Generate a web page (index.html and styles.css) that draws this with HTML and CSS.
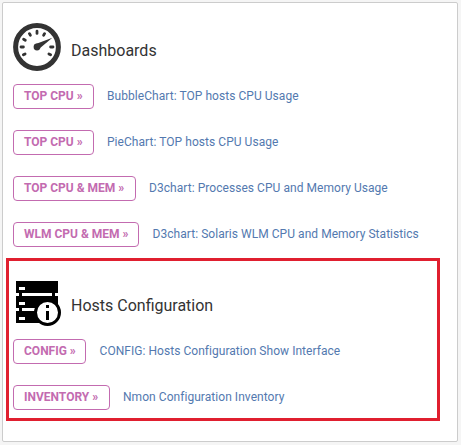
FILE: index.html
```html
<!DOCTYPE html>
<html lang="en">
<head>
<meta charset="utf-8">
<title>Dashboards</title>
<link rel="stylesheet" href="styles.css">
</head>
<body>
<main class="panel">
  <section class="group">
    <h2 class="heading">
      <svg class="icon" viewBox="0 0 48 48" aria-hidden="true">
        <circle cx="24" cy="24" r="21.4" fill="#fff" stroke="#333" stroke-width="5"/>
        <g stroke="#333" stroke-width="2.8" stroke-linecap="round">
          <path d="M24 8.2v2.2M16.4 10.6l1 1.6M31.6 10.6l-1 1.6M10.6 16.3l1.7 1M8 24h2.4M37.6 24H40M10.4 31.8l1.7-.9M37.6 31.8l-1.7-.9"/>
        </g>
        <path d="M39.4 14.7L26.5 25.4 22.7 21z" fill="#333"/>
        <circle cx="24" cy="24" r="3.4" fill="#333"/>
      </svg>
      <span class="title">Dashboards</span>
    </h2>
    <div class="row"><a class="button top">TOP CPU »</a><a class="link">BubbleChart: TOP hosts CPU Usage</a></div>
    <div class="row"><a class="button top">TOP CPU »</a><a class="link">PieChart: TOP hosts CPU Usage</a></div>
    <div class="row"><a class="button top-mem">TOP CPU &amp; MEM »</a><a class="link">D3chart: Processes CPU and Memory Usage</a></div>
    <div class="row"><a class="button wlm">WLM CPU &amp; MEM »</a><a class="link">D3chart: Solaris WLM CPU and Memory Statistics</a></div>
  </section>
  <section class="group highlighted">
    <h2 class="heading">
      <svg class="icon" viewBox="0 0 48 48" aria-hidden="true">
        <g shape-rendering="crispEdges">
          <path d="M3 3h42v12H3zM6 15h3v3H6zM39 15h3v3h-3zM3 18h42v12H3zM6 30h3v3H6zM3 33h30v12H3z"/>
          <path d="M6 9h6v3H6zM6 24h6v3H6zM6 39h6v3H6zM9 30h14v3H9z" fill="#fff"/>
        </g>
        <circle cx="34.5" cy="34.5" r="12" fill="#fff" stroke="#000" stroke-width="3"/>
        <path d="M33 27h3v3h-3zM33 33h3v9h-3z"/>
      </svg>
      <span class="title">Hosts Configuration</span>
    </h2>
    <div class="row"><a class="button config">CONFIG »</a><a class="link">CONFIG: Hosts Configuration Show Interface</a></div>
    <div class="row"><a class="button inventory">INVENTORY »</a><a class="link">Nmon Configuration Inventory</a></div>
  </section>
</main>
</body>
</html>
```
FILE: styles.css
```css
* {
  box-sizing: border-box;
}

body {
  margin: 0;
  padding: 2px;
  background: #f5f5f5;
  font: 12px/15px Roboto, "Liberation Sans", sans-serif;
}

.panel {
  width: 456px;
  height: 440px;
  padding: 20px 17px 0 3px;
  background: #fff;
  border: 1px solid #ccc;
  border-radius: 2px;
}

.group {
  display: flex;
  flex-direction: column;
  gap: 21px;
  padding: 0 7px 11px;
}

.highlighted {
  height: 163px;
  padding: 17px 4px 0;
  border: 3px solid #e01f2f;
}

.heading {
  display: flex;
  gap: 10px;
  height: 48px;
  margin: 0 0 -8px;
  font-size: 16px;
  font-weight: 400;
  line-height: 20px;
  color: #333;
}

.icon {
  flex: none;
  width: 48px;
  height: 48px;
}

.title {
  padding-top: 18px;
}

.row {
  display: flex;
  gap: 13px;
  height: 25px;
  white-space: nowrap;
}

.button {
  flex: none;
  height: 25px;
  padding: 4px 0 4px 10px;
  border: 1px solid #c36bb0;
  border-radius: 4px;
  color: #c36bb0;
  font-weight: 700;
}

.top {
  width: 81px;
}

.top-mem {
  width: 123px;
}

.wlm {
  width: 126px;
  margin-right: 0.6px;
}

.config {
  width: 73px;
  margin-right: 0.6px;
}

.inventory {
  width: 97px;
}

.link {
  padding-top: 5px;
  color: #5379af;
  letter-spacing: 0.05px;
}

.wlm + .link,
.config + .link {
  letter-spacing: 0.04px;
}
```
